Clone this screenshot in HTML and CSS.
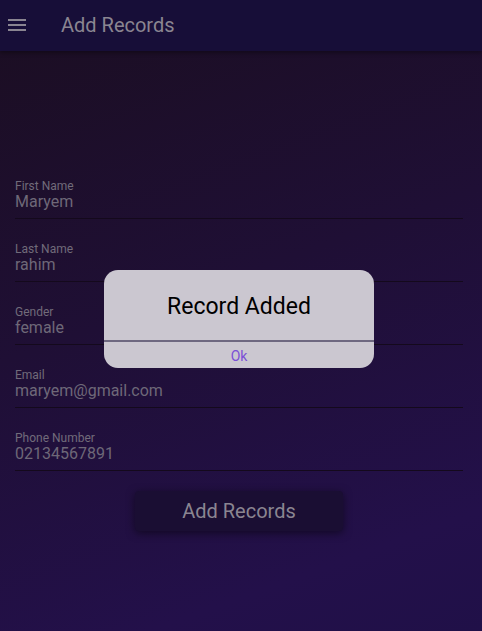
FILE: index.html
```html
<!DOCTYPE html>
<html>
<head>
<meta charset="utf-8">
<link rel="stylesheet" href="styles.css">
</head>
<body>
<div class="app">
  <header class="bar">
    <svg class="menu" width="18" height="14" viewBox="0 0 18 14"><rect x="0" y="1" width="18" height="2" fill="#8a8591"/><rect x="0" y="6" width="18" height="2" fill="#8a8591"/><rect x="0" y="11" width="18" height="2" fill="#8a8591"/></svg>
    <span class="title">Add Records</span>
  </header>
  <main class="form">
    <div class="field"><div class="label">First Name</div><div class="value">Maryem</div></div>
    <div class="field"><div class="label">Last Name</div><div class="value">rahim</div></div>
    <div class="field"><div class="label">Gender</div><div class="value">female</div></div>
    <div class="field"><div class="label">Email</div><div class="value">maryem@gmail.com</div></div>
    <div class="field"><div class="label">Phone Number</div><div class="value">02134567891</div></div>
    <div class="actions"><button class="btn">Add Records</button></div>
  </main>
  <div class="dialog">
    <div class="dialog-title">Record Added</div>
    <div class="dialog-ok">Ok</div>
  </div>
</div>
</body>
</html>
```
FILE: styles.css
```css
html, body { margin: 0; padding: 0; }
body {
  width: 482px; height: 631px; overflow: hidden;
  font-family: Roboto, "Liberation Sans", sans-serif;
}
.app {
  position: relative;
  width: 482px; height: 631px;
  background: linear-gradient(160deg, #1b0e21 0%, #1f0f35 45%, #23104a 85%, #201048 100%);
}
.bar {
  height: 51px;
  background: #170e38;
  display: flex; align-items: center;
  box-shadow: 0 2px 4px rgba(0,0,0,0.35);
  position: relative; z-index: 1;
}
.menu { margin-left: 8px; margin-top: -2px; }
.title {
  margin-left: 35px; font-size: 20px; color: #8a8591; margin-top: -2px;
}
.form { padding: 105px 19px 0 15px; }
.field {
  height: 63px;
  border-bottom: 1px solid #14091c;
  display: flex; flex-direction: column; justify-content: flex-end;
  padding-bottom: 7px; box-sizing: border-box;
}
.label { font-size: 12px; color: #716b7a; line-height: 14px; }
.value { font-size: 16px; color: #6e6878; line-height: 18px; }
.actions { display: flex; justify-content: center; padding-top: 20px; }
.btn {
  width: 208px; height: 40px;
  border: none; border-radius: 4px;
  background: #1a0e33;
  color: #8a8591; font-family: inherit; font-size: 20px;
  box-shadow: 0 2px 8px rgba(0,0,0,0.5);
}
.dialog {
  position: absolute; left: 104px; top: 270px;
  width: 270px; height: 98px;
  background: #cbc7d0; border-radius: 14px;
  display: flex; flex-direction: column;
}
.dialog-title {
  height: 72px; box-sizing: border-box;
  display: flex; align-items: center; justify-content: center;
  font-size: 23px; color: #000; padding-top: 3px;
  border-bottom: 2px solid #6e6880;
}
.dialog-ok {
  flex: 1; display: flex; align-items: center; justify-content: center;
  font-size: 14px; color: #7a4fd6; padding-top: 2px;
}
```
